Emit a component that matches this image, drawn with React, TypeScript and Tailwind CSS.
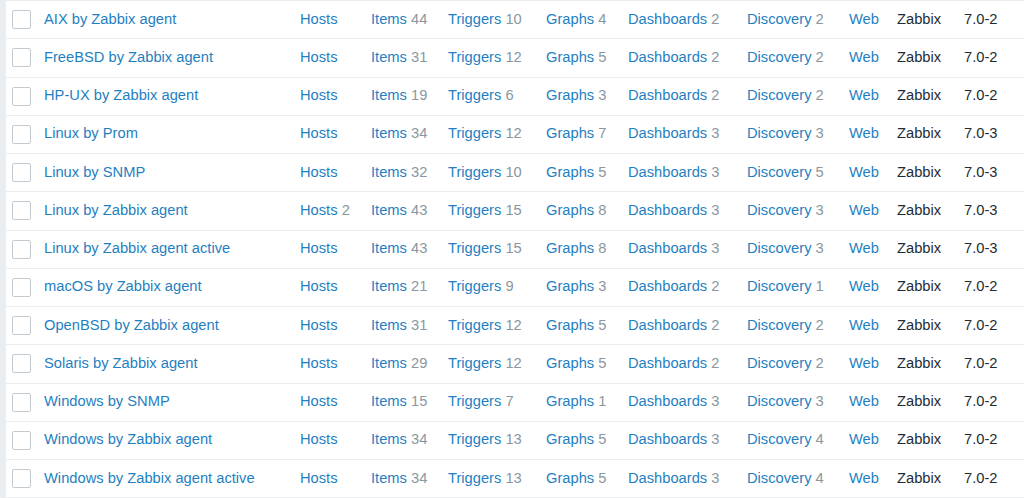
const rows = [
  { name: "AIX by Zabbix agent", hosts: 0, items: 44, triggers: 10, graphs: 4, dashboards: 2, discovery: 2, version: "7.0-2" },
  { name: "FreeBSD by Zabbix agent", hosts: 0, items: 31, triggers: 12, graphs: 5, dashboards: 2, discovery: 2, version: "7.0-2" },
  { name: "HP-UX by Zabbix agent", hosts: 0, items: 19, triggers: 6, graphs: 3, dashboards: 2, discovery: 2, version: "7.0-2" },
  { name: "Linux by Prom", hosts: 0, items: 34, triggers: 12, graphs: 7, dashboards: 3, discovery: 3, version: "7.0-3" },
  { name: "Linux by SNMP", hosts: 0, items: 32, triggers: 10, graphs: 5, dashboards: 3, discovery: 5, version: "7.0-3" },
  { name: "Linux by Zabbix agent", hosts: 2, items: 43, triggers: 15, graphs: 8, dashboards: 3, discovery: 3, version: "7.0-3" },
  { name: "Linux by Zabbix agent active", hosts: 0, items: 43, triggers: 15, graphs: 8, dashboards: 3, discovery: 3, version: "7.0-3" },
  { name: "macOS by Zabbix agent", hosts: 0, items: 21, triggers: 9, graphs: 3, dashboards: 2, discovery: 1, version: "7.0-2" },
  { name: "OpenBSD by Zabbix agent", hosts: 0, items: 31, triggers: 12, graphs: 5, dashboards: 2, discovery: 2, version: "7.0-2" },
  { name: "Solaris by Zabbix agent", hosts: 0, items: 29, triggers: 12, graphs: 5, dashboards: 2, discovery: 2, version: "7.0-2" },
  { name: "Windows by SNMP", hosts: 0, items: 15, triggers: 7, graphs: 1, dashboards: 3, discovery: 3, version: "7.0-2" },
  { name: "Windows by Zabbix agent", hosts: 0, items: 34, triggers: 13, graphs: 5, dashboards: 3, discovery: 4, version: "7.0-2" },
  { name: "Windows by Zabbix agent active", hosts: 0, items: 34, triggers: 13, graphs: 5, dashboards: 3, discovery: 4, version: "7.0-2" },
]

function LinkCount({ label, count }: { label: string; count?: number }) {
  return (
    <span className="whitespace-nowrap">
      <a href="#" className="text-[#1f7fc1]">{label}</a>
      {count ? <span className="text-[#8a979e]"> {count}</span> : null}
    </span>
  )
}

export default function App() {
  return (
    <div className="min-h-screen bg-white" style={{ fontFamily: '"Liberation Sans", Arial, sans-serif' }}>
      <div className="flex">
        <div className="w-[6px] shrink-0 bg-[#ebeef0]" />
        <div className="flex-1 bg-white border-t border-[#ebeef0] text-[14.7px]">
          {rows.map((r) => (
            <div
              key={r.name}
              className="grid grid-cols-[38px_256px_71px_77px_98px_82px_119px_102px_48px_67px_1fr] items-center h-[38.25px] pb-[2px] border-b border-[#ebeef0]"
            >
              <div className="pl-[6px] pt-[2px] flex items-center">
                <span className="block w-[19px] h-[19px] rounded-[2px] border border-[#c4cbd0] bg-white" />
              </div>
              <a href="#" className="text-[#1f7fc1] whitespace-nowrap">{r.name}</a>
              <LinkCount label="Hosts" count={r.hosts} />
              <LinkCount label="Items" count={r.items} />
              <LinkCount label="Triggers" count={r.triggers} />
              <LinkCount label="Graphs" count={r.graphs} />
              <LinkCount label="Dashboards" count={r.dashboards} />
              <LinkCount label="Discovery" count={r.discovery} />
              <LinkCount label="Web" />
              <span className="text-[#1f2c33]">Zabbix</span>
              <span className="text-[#1f2c33]">{r.version}</span>
            </div>
          ))}
        </div>
      </div>
    </div>
  )
}
